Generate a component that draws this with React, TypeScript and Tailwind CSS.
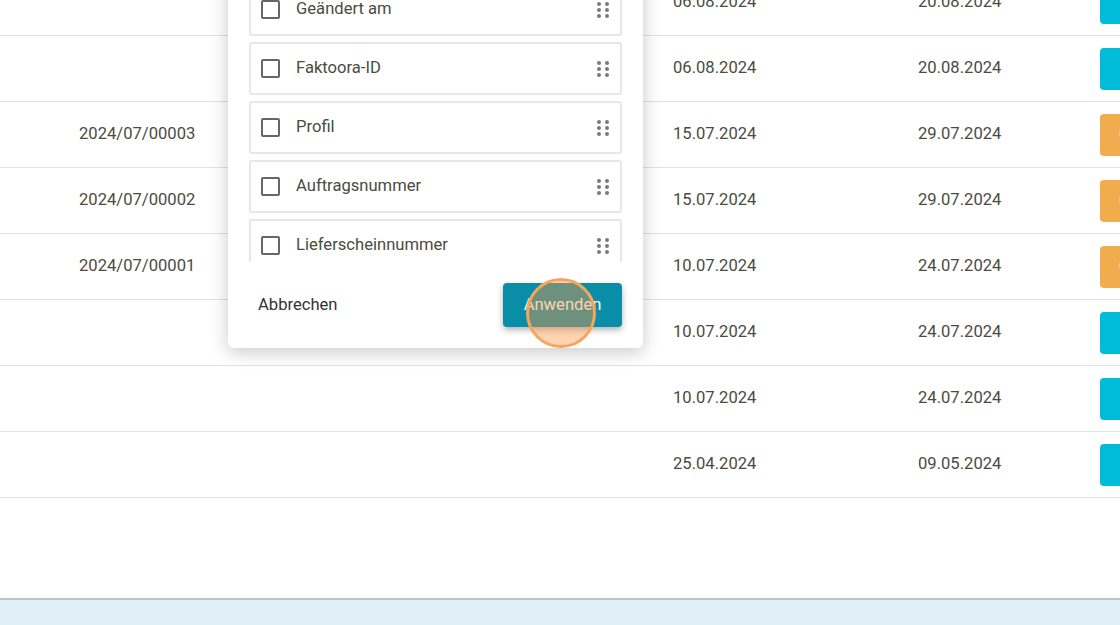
import React from "react";

const rows: { id: string; d1: string; d2: string; c: "cyan" | "orange" }[] = [
  { id: "", d1: "06.08.2024", d2: "20.08.2024", c: "cyan" },
  { id: "", d1: "06.08.2024", d2: "20.08.2024", c: "cyan" },
  { id: "2024/07/00003", d1: "15.07.2024", d2: "29.07.2024", c: "orange" },
  { id: "2024/07/00002", d1: "15.07.2024", d2: "29.07.2024", c: "orange" },
  { id: "2024/07/00001", d1: "10.07.2024", d2: "24.07.2024", c: "orange" },
  { id: "", d1: "10.07.2024", d2: "24.07.2024", c: "cyan" },
  { id: "", d1: "10.07.2024", d2: "24.07.2024", c: "cyan" },
  { id: "", d1: "25.04.2024", d2: "09.05.2024", c: "cyan" },
];

const items = ["Geändert am", "Faktoora-ID", "Profil", "Auftragsnummer", "Lieferscheinnummer"];

function DragHandle() {
  return (
    <svg width="14" height="18" viewBox="0 0 14 18" fill="#7a7a7a">
      <circle cx="3" cy="3" r="2" />
      <circle cx="11" cy="3" r="2" />
      <circle cx="3" cy="9" r="2" />
      <circle cx="11" cy="9" r="2" />
      <circle cx="3" cy="15" r="2" />
      <circle cx="11" cy="15" r="2" />
    </svg>
  );
}

export default function App() {
  return (
    <div
      className="relative w-[1120px] h-[625px] overflow-hidden bg-white flex flex-col text-[16.6px] text-[#4b4b40]"
      style={{ fontFamily: "Roboto, 'Liberation Sans', sans-serif" }}
    >
      <div className="flex-1 flex flex-col -mt-[30px]">
        {rows.map((r, i) => (
          <div key={i} className="flex items-center h-[66px] border-b border-[#e2e2e2] shrink-0 w-[1220px]">
            <div className="w-[673px] pl-[79px] shrink-0">{r.id}</div>
            <div className="w-[245px] shrink-0">{r.d1}</div>
            <div className="w-[182px] shrink-0">{r.d2}</div>
            <div
              className={
                "h-[42px] w-[120px] rounded-[4px] flex items-center pl-[19px] text-white text-[14px] shrink-0 " +
                (r.c === "cyan" ? "bg-[#00bcd9]" : "bg-[#f0ac4d]")
              }
            >
              {r.c === "orange" ? "Offen" : ""}
            </div>
          </div>
        ))}
      </div>
      <div className="h-[27px] border-t-2 border-[#c4c4c4] bg-[#dff0f8] shrink-0" />

      {/* Popup */}
      <div className="absolute left-[228px] top-[-30px] w-[415px] h-[378px] bg-white rounded-[6px] shadow-[0_4px_18px_rgba(0,0,0,0.22)] flex flex-col">
        <div className="h-[292px] overflow-hidden px-[21px] pt-[13px] flex flex-col gap-[6px]">
          {items.map((t) => (
            <div
              key={t}
              className="h-[53px] shrink-0 border-2 border-[#e6e7ea] rounded-[3px] flex items-center pl-[10px] pr-[10px]"
            >
              <div className="w-[19px] h-[19px] border-2 border-[#666] rounded-[2px] shrink-0" />
              <div className="ml-[16px] flex-1 text-[#4b4b40]">{t}</div>
              <DragHandle />
            </div>
          ))}
        </div>
        <div className="flex-1 flex items-center justify-between pl-[30px] pr-[21px]">
          <span className="text-[#333]">Abbrechen</span>
          <div className="w-[119px] h-[44px] rounded-[4px] bg-[#0a8ea7] text-white flex items-center justify-center shadow-[0_3px_6px_rgba(0,0,0,0.3)]">
            Anwenden
          </div>
        </div>
      </div>

      {/* Click indicator */}
      <div className="absolute left-[526px] top-[278px] w-[70px] h-[70px] rounded-full border-[3px] border-[#f6a55c] bg-[rgba(250,150,70,0.42)]" />
    </div>
  );
}
